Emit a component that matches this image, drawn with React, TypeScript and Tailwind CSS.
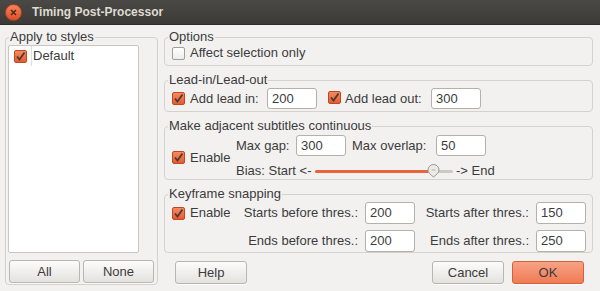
import React from 'react';

function Check({ checked = false }: { checked?: boolean }) {
    if (!checked) {
        return (
            <span className="inline-block w-[13px] h-[13px] shrink-0 rounded-[2px] border border-[#a29e98] bg-gradient-to-b from-[#ffffff] to-[#eeedeb]" />
        );
    }
    return (
        <span className="inline-flex items-center justify-center w-[13px] h-[13px] shrink-0 rounded-[2px] border border-[#c2461f] bg-gradient-to-b from-[#f58a60] to-[#e35b31]">
            <svg width="11" height="11" viewBox="0 0 11 11">
                <path d="M2 5.5 L4.5 8.5 L9.5 1.5" fill="none" stroke="#4a3a33" strokeWidth="1.8" />
            </svg>
        </span>
    );
}

function Field({ value, className = '' }: { value: string; className?: string }) {
    return (
        <div className={`w-[50px] h-[21px] shrink-0 flex items-center pl-[4px] bg-white border border-[#b4b0aa] rounded-[3px] ${className}`}>
            {value}
        </div>
    );
}

function Button({ label, primary = false, className = '' }: { label: string; primary?: boolean; className?: string }) {
    const look = primary
        ? 'border-[#d4613a] bg-gradient-to-b from-[#f7a285] to-[#ef7b54] text-[#3c3c3c]'
        : 'border-[#b9b5af] bg-gradient-to-b from-[#fcfcfb] to-[#e4e2df] text-[#3c3c3c]';
    return (
        <div className={`h-[23px] flex items-center justify-center rounded-[3px] border shadow-[0_1px_0_rgba(255,255,255,0.7)] ${look} ${className}`}>
            {label}
        </div>
    );
}

function Group({ title, className, children }: { title: string; className: string; children: React.ReactNode }) {
    return (
        <fieldset className={`border border-[#d5d1cc] rounded-[4px] px-[6px] ${className}`}>
            <legend className="ml-[-3px] px-[1px] leading-[14px]">{title}</legend>
            {children}
        </fieldset>
    );
}

function Slider() {
    return (
        <div className="relative w-[138px] h-[16px] flex items-center">
            <div className="h-[3px] w-[113px] rounded-l-full bg-[#e8633a]" />
            <div className="h-[3px] flex-1 rounded-r-full bg-[#cdc9c4]" />
            <svg className="absolute left-[112px] top-[1px]" width="13" height="14" viewBox="0 0 13 14">
                <path d="M6.5 0.5 A5.5 5.5 0 0 1 12 6 C12 8.6 9.6 10.6 6.5 13 C3.4 10.6 1 8.6 1 6 A5.5 5.5 0 0 1 6.5 0.5 Z" fill="#eceae7" stroke="#9a968f" />
                <path d="M4.5 6 H8.5" stroke="#b5b1ab" />
            </svg>
        </div>
    );
}

export default function App() {
    return (
        <div className="w-[600px] h-[291px] bg-[#f2f1f0] text-[#3c3c3c] text-[13px] font-['Liberation_Sans',sans-serif] flex flex-col overflow-hidden">
            {/* Title bar */}
            <div className="h-[25px] shrink-0 flex items-center bg-gradient-to-b from-[#4a4945] to-[#3b3a36] border-b border-[#2f2e2b]">
                <div className="ml-[5px] w-[17px] h-[17px] rounded-full flex items-center justify-center bg-gradient-to-b from-[#f4855b] to-[#dd4f26] border border-[#b3401c]">
                    <svg width="7" height="7" viewBox="0 0 7 7">
                        <path d="M1 1 L6 6 M6 1 L1 6" stroke="#4b2418" strokeWidth="1.4" />
                    </svg>
                </div>
                <span className="ml-[10px] text-[12px] font-bold text-[#dfdbd2]">Timing Post-Processor</span>
            </div>

            <div className="flex-1 flex px-[5px] pt-[5px]">
                {/* Left column */}
                <fieldset className="w-[153px] h-[255px] border border-[#d5d1cc] rounded-[4px] px-[2px] flex flex-col">
                    <legend className="ml-[1px] px-[1px] leading-[14px]">Apply to styles</legend>
                    <div className="mt-[1px] w-[131px] h-[208px] bg-white border border-[#c9c5c0] rounded-[2px]">
                        <div className="flex items-center h-[20px]">
                            <div className="w-[23px] h-[20px] flex items-center justify-end pr-[4px] border-r border-[#e2dfdb]">
                                <Check checked />
                            </div>
                            <span className="ml-[1px]">Default</span>
                        </div>
                    </div>
                    <div className="flex gap-[3px] mt-[7px] ml-[1px]">
                        <Button label="All" className="w-[71px]" />
                        <Button label="None" className="w-[71px]" />
                    </div>
                </fieldset>

                {/* Right column */}
                <div className="ml-[6px] w-[429px] flex flex-col gap-[7px]">
                    <Group title="Options" className="h-[36px]">
                        <div className="flex items-center h-[18px] pl-[1px]">
                            <Check />
                            <span className="ml-[5px]">Affect selection only</span>
                        </div>
                    </Group>

                    <Group title="Lead-in/Lead-out" className="h-[39px]">
                        <div className="flex items-center h-[21px] mt-[1px] pl-[1px]">
                            <Check checked />
                            <span className="ml-[5px] w-[77px]">Add lead in:</span>
                            <Field value="200" />
                            <span className="ml-[11px]"><Check checked /></span>
                            <span className="ml-[4px] w-[86px]">Add lead out:</span>
                            <Field value="300" />
                        </div>
                    </Group>

                    <Group title="Make adjacent subtitles continuous" className="h-[61px]">
                        <div className="flex pl-[1px]">
                            <div className="w-[64px] flex items-center mt-[3px]">
                                <Check checked />
                                <span className="ml-[5px]">Enable</span>
                            </div>
                            <div className="flex flex-col">
                                <div className="flex items-center h-[21px] mt-[2px]">
                                    <span className="w-[60px]">Max gap:</span>
                                    <Field value="300" />
                                    <span className="ml-[6px] w-[84px]">Max overlap:</span>
                                    <Field value="50" />
                                </div>
                                <div className="flex items-center h-[16px] mt-[7px]">
                                    <span className="w-[79px]">Bias: Start &lt;-</span>
                                    <Slider />
                                    <span className="ml-[3px]">-&gt; End</span>
                                </div>
                            </div>
                        </div>
                    </Group>

                    <Group title="Keyframe snapping" className="h-[66px]">
                        <div className="flex pl-[1px] mt-[1px]">
                            <div className="w-[64px] h-[22px] flex items-center">
                                <Check checked />
                                <span className="ml-[5px]">Enable</span>
                            </div>
                            <div className="grid grid-cols-[122px_50px_107px_50px] gap-x-[7px] gap-y-[6px] items-center">
                                <span className="text-right">Starts before thres.:</span>
                                <Field value="200" className="h-[22px]" />
                                <span className="text-right">Starts after thres.:</span>
                                <Field value="150" className="h-[22px]" />
                                <span className="text-right">Ends before thres.:</span>
                                <Field value="200" className="h-[22px]" />
                                <span className="text-right">Ends after thres.:</span>
                                <Field value="250" className="h-[22px]" />
                            </div>
                        </div>
                    </Group>

                    <div className="flex items-center mt-[1px] pl-[11px] pr-[9px]">
                        <Button label="Help" className="w-[72px]" />
                        <div className="flex-1" />
                        <Button label="Cancel" className="w-[72px]" />
                        <Button label="OK" primary className="w-[72px] ml-[8px]" />
                    </div>
                </div>
            </div>
        </div>
    );
}
